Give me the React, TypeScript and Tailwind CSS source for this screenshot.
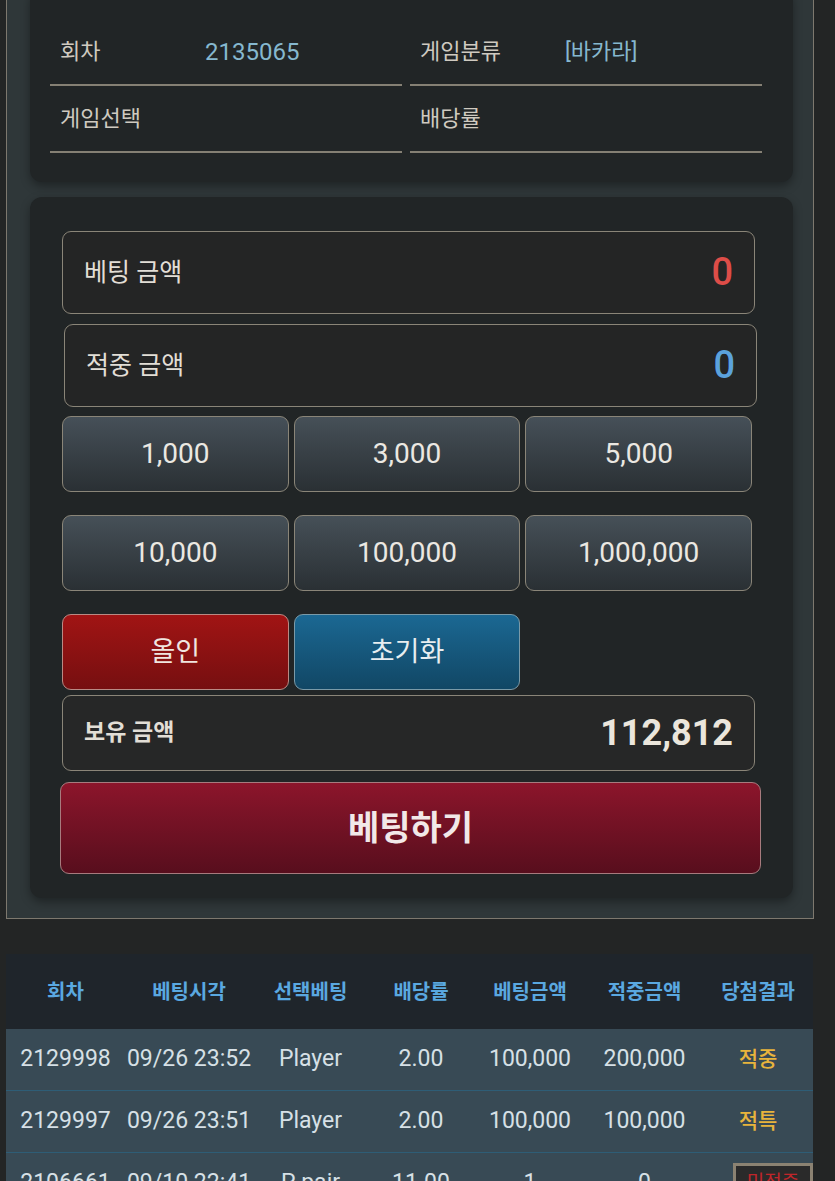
import React from 'react';

const chips = ['1,000', '3,000', '5,000', '10,000', '100,000', '1,000,000'];

const history = [
  { round: '2129998', time: '09/26 23:52', pick: 'Player', odds: '2.00', bet: '100,000', win: '200,000', result: '적중' },
  { round: '2129997', time: '09/26 23:51', pick: 'Player', odds: '2.00', bet: '100,000', win: '100,000', result: '적특' },
  { round: '2106661', time: '09/10 22:41', pick: 'P pair', odds: '11.00', bet: '1', win: '0', result: '미적중' },
];

const cols = 'grid grid-cols-[119px_128px_115px_106px_112px_117px_110px]';

const App = () => {
  return (
    <div className="min-h-screen bg-[#232525] font-['Roboto','Noto_Sans_CJK_KR',sans-serif] text-[#ddd9d0] overflow-hidden">
      {/* betting panel */}
      <div className="ml-[6px] w-[808px] -mt-[30px] border border-[#7d786e] bg-[#2f3739] pt-[17px] pb-[20px] pl-[23px] pr-[20px]">
        <div className="rounded-[12px] bg-[#212526] shadow-[0_4px_10px_rgba(0,0,0,0.35)] pt-[31px] pb-[29px] pl-[20px] pr-[31px]">
          <div className="grid grid-cols-2 gap-x-[8px]">
            <div className="flex items-center h-[67px] border-b-2 border-[#858074] pl-[10px] text-[22px]">
              <span className="w-[145px] text-[#cfcac0]">회차</span>
              <span className="text-[#86b8cf] text-[24px]">2135065</span>
            </div>
            <div className="flex items-center h-[67px] border-b-2 border-[#858074] pl-[10px] text-[22px]">
              <span className="w-[145px] text-[#cfcac0]">게임분류</span>
              <span className="text-[#86b8cf]">[바카라]</span>
            </div>
            <div className="flex items-center h-[67px] border-b-2 border-[#858074] pl-[10px] text-[22px]">
              <span className="text-[#cfcac0]">게임선택</span>
            </div>
            <div className="flex items-center h-[67px] border-b-2 border-[#858074] pl-[10px] text-[22px]">
              <span className="text-[#cfcac0]">배당률</span>
            </div>
          </div>
        </div>

        <div className="mt-[15px] rounded-[12px] bg-[#212526] shadow-[0_4px_10px_rgba(0,0,0,0.35)] pt-[34px] pb-[24px] pl-[32px] pr-[38px]">
          <div className="flex items-center justify-between h-[83px] rounded-[9px] border border-[#8a8578] bg-[#242525] px-[21px]">
            <span className="text-[25px] text-[#e2ded6]">베팅 금액</span>
            <span className="text-[38px] font-medium text-[#dd4d48]">0</span>
          </div>
          <div className="mt-[10px] ml-[2px] -mr-[2px] flex items-center justify-between h-[83px] rounded-[9px] border border-[#8a8578] bg-[#242525] px-[21px]">
            <span className="text-[25px] text-[#e2ded6]">적중 금액</span>
            <span className="text-[38px] font-medium text-[#5ba2dc]">0</span>
          </div>

          <div className="mt-[9px] grid grid-cols-3 gap-x-[5px] gap-y-[23px] pr-[3px]">
            {chips.map((c) => (
              <button
                key={c}
                className="h-[76px] rounded-[9px] border border-[#8a8578] bg-gradient-to-b from-[#465058] to-[#2a3034] text-[28px] text-[#ebe8e2]"
              >
                {c}
              </button>
            ))}
            <button className="h-[76px] rounded-[9px] border border-[#b98a84] bg-gradient-to-b from-[#a11414] to-[#760f10] text-[27px] text-[#f0e6e0]">
              올인
            </button>
            <button className="h-[76px] rounded-[9px] border border-[#7a9aa8] bg-gradient-to-b from-[#1b6893] to-[#114765] text-[27px] text-[#e8eef0]">
              초기화
            </button>
          </div>

          <div className="mt-[5px] flex items-center justify-between h-[76px] rounded-[9px] border border-[#8a8578] bg-[#262727] px-[21px]">
            <span className="text-[23px] font-bold text-[#e2ded6]">보유 금액</span>
            <span className="text-[36px] font-bold text-[#ebe6dc]">112,812</span>
          </div>

          <button className="mt-[11px] -ml-[2px] w-[701px] h-[92px] rounded-[9px] border border-[#a77b7e] bg-gradient-to-b from-[#8c152b] to-[#580e1d] text-[34px] font-bold text-[#f2e8e8]">
            베팅하기
          </button>
        </div>
      </div>

      {/* bet history */}
      <div className="ml-[6px] w-[807px] mt-[35px]">
        <div className={`${cols} h-[75px] items-center bg-[#1f252b] text-center text-[20px] font-bold text-[#5aa8e0]`}>
          <span>회차</span>
          <span>베팅시각</span>
          <span>선택베팅</span>
          <span>배당률</span>
          <span>베팅금액</span>
          <span>적중금액</span>
          <span>당첨결과</span>
        </div>
        {history.map((r) => (
          <div
            key={r.round}
            className={`${cols} h-[62px] items-center bg-[#384a55] border-b border-[#2e5d76] text-center text-[23px] text-[#d6e0e6]`}
          >
            <span>{r.round}</span>
            <span>{r.time}</span>
            <span>{r.pick}</span>
            <span>{r.odds}</span>
            <span>{r.bet}</span>
            <span>{r.win}</span>
            {r.result === '미적중' ? (
              <span className="justify-self-end w-[80px] h-[42px] flex items-center justify-center border-[3px] border-[#8b8272] bg-[#2a2a2a] text-[19px] text-[#c0262a]">
                미적중
              </span>
            ) : (
              <span className="text-[21px] font-medium text-[#e8b43c]">{r.result}</span>
            )}
          </div>
        ))}
      </div>
    </div>
  );
};

export default App;
